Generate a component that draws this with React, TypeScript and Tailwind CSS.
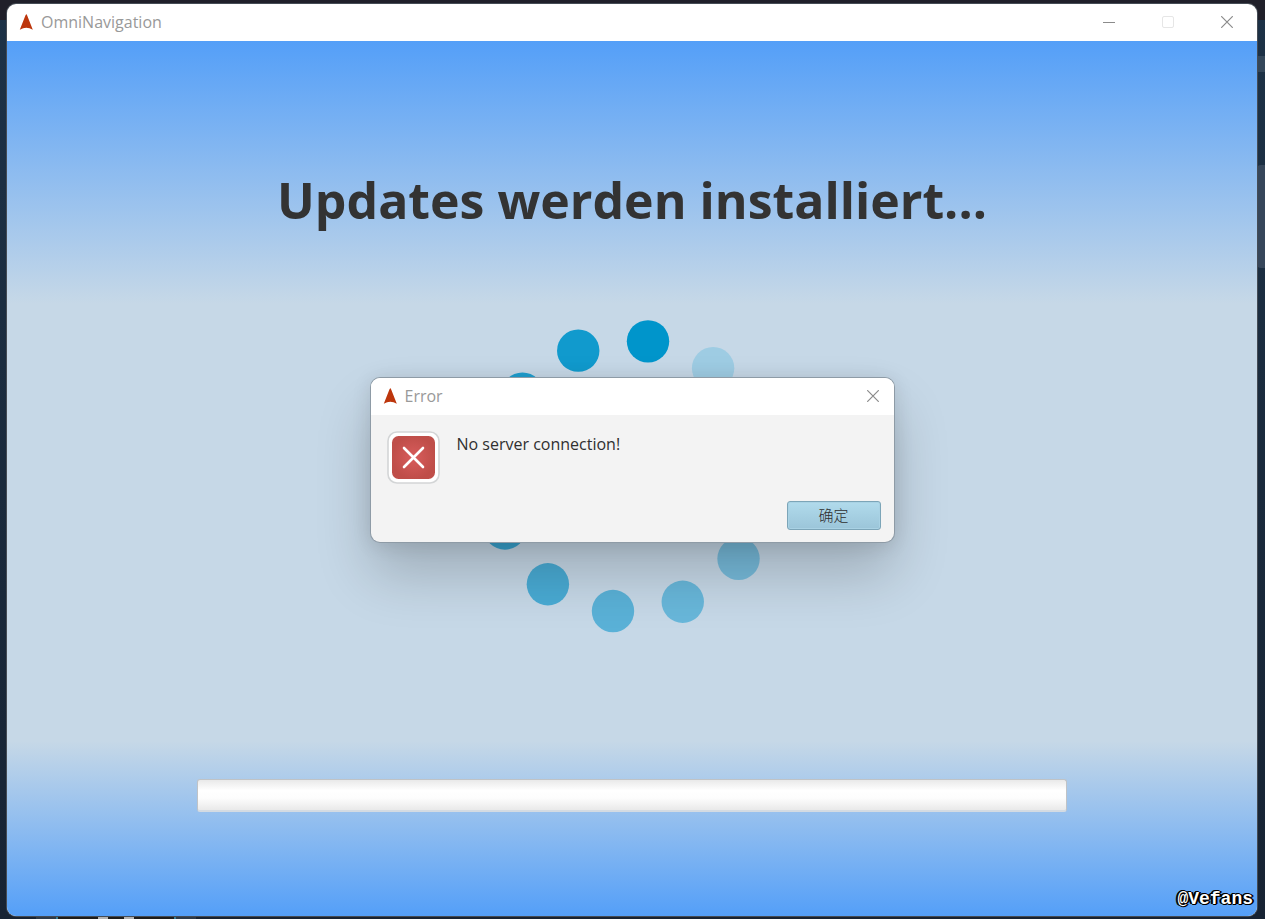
import React from "react";

const DOTS = [
  { angle: 7, fill: "#0095cb" },
  { angle: 37, fill: "#9ecce3" },
  { angle: 67, fill: "#91c6e0" },
  { angle: 97, fill: "#84c0dd" },
  { angle: 127, fill: "#77bbdb" },
  { angle: 157, fill: "#68b7da" },
  { angle: 187, fill: "#5ab1d7" },
  { angle: 217, fill: "#49abd4" },
  { angle: 247, fill: "#3aa6d2" },
  { angle: 277, fill: "#2ca2d0" },
  { angle: 307, fill: "#1f9ecf" },
  { angle: 337, fill: "#119acd" },
];

function ArrowLogo() {
  return (
    <svg width="14" height="16" viewBox="0 0 14 16" aria-hidden="true">
      <path d="M7.3 0 L8.2 1.5 L13.8 15.8 Q7.3 11.6 0.8 15.8 L6.4 1.5 Z" fill="#bd360c" />
    </svg>
  );
}

function CloseIcon() {
  return (
    <svg width="12" height="12" viewBox="0 0 12 12" aria-hidden="true">
      <path d="M0.2 0.2 L11.8 11.8 M11.8 0.2 L0.2 11.8" stroke="#8b8b8b" strokeWidth="1.2" />
    </svg>
  );
}

function Spinner() {
  return (
    <svg width="320" height="320" viewBox="0 0 320 320" role="img" aria-label="Updates werden installiert">
      {DOTS.map(({ angle, fill }) => {
        const a = ((angle + 0.4) * Math.PI) / 180;
        return <circle key={angle} cx={158.5 + 136 * Math.sin(a)} cy={160.2 - 136 * Math.cos(a)} r="21.2" fill={fill} />;
      })}
    </svg>
  );
}

function ErrorIcon() {
  return (
    <svg width="53" height="53" viewBox="0 0 53 53" className="shrink-0" role="img" aria-label="Error">
      <defs>
        <radialGradient id="error-red">
          <stop offset="0" stopColor="#d95c5c" />
          <stop offset="1" stopColor="#bf4e49" />
        </radialGradient>
      </defs>
      <rect x="1" y="1" width="51" height="51" rx="9" fill="#fff" stroke="#d3d5d6" strokeWidth="1.6" />
      <rect x="5" y="5" width="43" height="43" rx="6.5" fill="url(#error-red)" />
      <path d="M17 17 L36 36 M36 17 L17 36" stroke="#fff" strokeWidth="2.6" strokeLinecap="round" />
    </svg>
  );
}

function Desktop() {
  return (
    <div aria-hidden="true" className="absolute inset-0 overflow-hidden bg-linear-to-b from-[#1d3247] to-[#172333]">
      <div className="absolute inset-x-0 top-0 h-5 bg-[#20202a]" />
      <div className="absolute right-0 top-14 h-4 w-2 bg-[#34475a]" />
      <div className="absolute right-0 top-[165px] h-[103px] w-2 rounded-l-sm bg-[#36465a]" />
      <div className="absolute bottom-0 left-9 flex h-1">
        <div className="w-5 bg-[#2d3a49]" />
        <div className="w-0.5 bg-[#347b96]" />
        <div className="w-10 bg-[#1c1c1c]" />
        <div className="w-2.5 bg-[#b5b5b5]" />
        <div className="w-4 bg-[#1c1c1c]" />
        <div className="w-2.5 bg-[#b5b5b5]" />
        <div className="w-10 bg-[#1c1c1c]" />
        <div className="w-0.5 bg-[#347b96]" />
        <div className="w-5 bg-[#2d3a49]" />
      </div>
    </div>
  );
}

function ErrorDialog() {
  return (
    <div className="absolute inset-0 flex items-center justify-center px-4">
      <section
        role="dialog"
        aria-label="Error"
        className="w-full max-w-[523px] overflow-hidden rounded-[9px] bg-[#f3f3f3] shadow-[0_0_0_1px_#8e9ba6,0_32px_56px_rgba(0,0,0,0.2),0_2px_20px_rgba(0,0,0,0.12)]"
      >
        <header className="flex h-[37px] items-center bg-white pb-px pl-3 pr-[15px]">
          <ArrowLogo />
          <h2 className="ml-2 flex-1 text-base text-[#999]">Error</h2>
          <button type="button" aria-label="Close">
            <CloseIcon />
          </button>
        </header>
        <div className="flex gap-[17px] px-4 pt-4">
          <ErrorIcon />
          <p className="pt-px text-base text-[#2f2f2f]">No server connection!</p>
        </div>
        <div className="flex justify-end pb-3 pr-[13px] pt-[17px]">
          <button
            type="button"
            className="h-[29px] w-[94px] rounded-[3px] border border-[#7ca5b8] bg-linear-to-b from-[#b1dbec] to-[#9bc5d9] pb-px text-[15px] font-light leading-5 text-[#2f2f2f] shadow-[inset_0_0_0_1px_#a9d2e4]"
          >
            确定
          </button>
        </div>
      </section>
    </div>
  );
}

export default function App() {
  return (
    <div className="relative flex min-h-screen flex-col pb-[3px] pl-[7px] pr-2 pt-1 font-['Open_Sans','Noto_Sans_CJK_SC',sans-serif]">
      <Desktop />
      <div className="relative flex flex-1 flex-col overflow-hidden rounded-[9px] bg-white shadow-[0_0_0_1px_#454c55]">
        <header className="flex h-[37px] items-center pb-px pl-3">
          <ArrowLogo />
          <span className="ml-2 flex-1 text-base text-[#999]">OmniNavigation</span>
          <div className="flex items-center gap-[47px] pr-6">
            <button type="button" aria-label="Minimize" className="flex h-3 w-3 items-center">
              <span className="h-px w-full bg-[#8b8b8b]" />
            </button>
            <button type="button" aria-label="Maximize" disabled className="h-3 w-3 rounded-[2px] border border-[#e6e6e6]" />
            <button type="button" aria-label="Close">
              <CloseIcon />
            </button>
          </div>
        </header>
        <main className="flex flex-1 flex-col items-center bg-[linear-gradient(#549ff8_0%,#c6d8e7_30%,#c6d8e7_80%,#549ff8_100%)] pb-[104px] pt-[123px]">
          <h1 className="text-[50px] font-bold leading-[72px] text-[#333]">Updates werden installiert...</h1>
          <div className="flex flex-1 items-start pt-20">
            <Spinner />
          </div>
          <div className="w-full px-[190px]">
            <progress
              aria-label="Progress"
              value={0}
              max={100}
              className="block h-[33px] w-full appearance-none rounded-[3px] border border-b-2 border-[#c0c3c6] border-b-[#d4dbe2] bg-[linear-gradient(#e9e9e9_0%,#fff_35%,#fdfdfd_60%,#e9e9e9_100%)] [&::-webkit-progress-bar]:bg-transparent"
            />
          </div>
        </main>
        <ErrorDialog />
        <span className="absolute bottom-[3px] right-1 font-['Liberation_Mono',monospace] text-lg leading-7 font-bold text-white [text-shadow:1px_0_#000,-1px_0_#000,0_1px_#000,0_-1px_#000,2px_0_#000,-2px_0_#000,1px_1px_#000,-1px_-1px_#000]">
          @Vefans
        </span>
      </div>
    </div>
  );
}
